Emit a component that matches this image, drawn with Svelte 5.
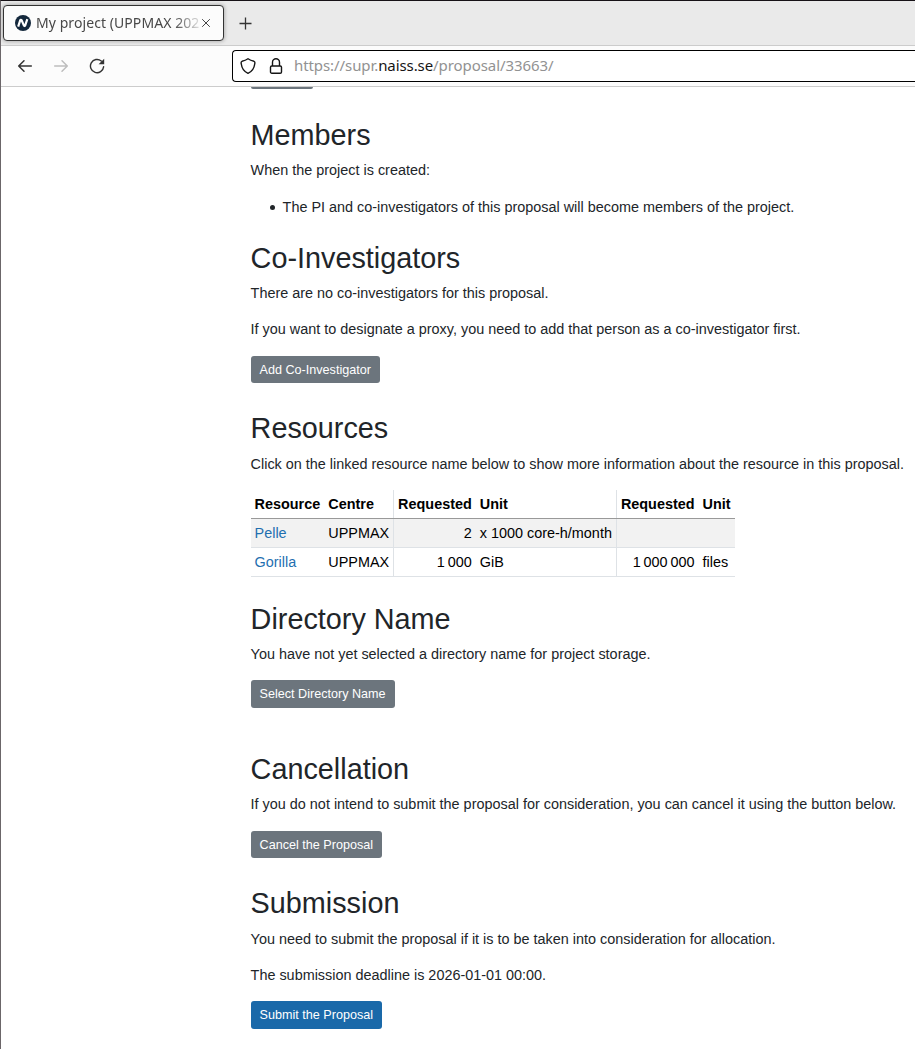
<script>
  const rows = [
    { name: 'Pelle', centre: 'UPPMAX', amount: '2', unit: 'x 1000 core-h/month', amount2: '', unit2: '' },
    { name: 'Gorilla', centre: 'UPPMAX', amount: '1\u2009000', unit: 'GiB', amount2: '1\u2009000\u2009000', unit2: 'files' }
  ];
</script>

<div class="window">
  <div class="tabs">
    <div class="tab">
      <svg class="logo" width="16" height="16" viewBox="0 0 16 16">
        <circle cx="8" cy="8" r="8" fill="#14283c" />
        <path d="M3.2 11.6 L5.1 5.6 Q5.8 4.2 6.8 5.5 L8.8 10.3 Q9.6 11.8 10.3 10.2 L12.3 4.2" fill="none" stroke="#fff" stroke-width="2.2" />
      </svg>
      <span class="title">My project (UPPMAX 202</span>
      <svg class="close" width="10" height="10" viewBox="0 0 10 10"><path d="M1.2 1.2 L8.8 8.8 M8.8 1.2 L1.2 8.8" stroke="#444" stroke-width="1" /></svg>
    </div>
    <svg class="plus" width="13" height="13" viewBox="0 0 13 13"><path d="M6.5 .5 V12.5 M.5 6.5 H12.5" stroke="#333" stroke-width="1.3" /></svg>
  </div>
  <div class="toolbar">
    <svg width="16" height="16" viewBox="0 0 16 16" fill="none" stroke="#333" stroke-width="1.5" stroke-linecap="round" stroke-linejoin="round"><path d="M14.3 8 H1.7 M7 2.7 L1.7 8 L7 13.3" /></svg>
    <svg class="forward" width="16" height="16" viewBox="0 0 16 16" fill="none" stroke="#bdbdbd" stroke-width="1.5" stroke-linecap="round" stroke-linejoin="round"><path d="M1.7 8 H14.3 M9 2.7 L14.3 8 L9 13.3" /></svg>
    <svg class="reload" width="16" height="16" viewBox="0 0 16 16"><path d="M14.6 8.8 A6.6 6.6 0 1 1 12.3 3" fill="none" stroke="#333" stroke-width="1.4" stroke-linecap="round" /><path d="M15.2 .8 V6.2 H9.6 Z" fill="#333" /></svg>
    <div class="address">
      <svg width="16" height="16" viewBox="0 0 16 16" fill="none" stroke="#151515" stroke-width="1.4" stroke-linejoin="round"><path d="M8 .8 Q10.5 2.6 14 3.3 Q15.3 3.7 14.7 6 Q13.9 12.8 8 15.3 Q2.1 12.8 1.3 6 Q.7 3.7 2 3.3 Q5.5 2.6 8 .8 Z" /></svg>
      <svg class="lock" width="14" height="16" viewBox="0 0 14 16" fill="none" stroke="#151515" stroke-width="1.4"><rect x="1.5" y="8" width="11" height="7.2" rx="1.3" /><path d="M3.5 8 V4.3 A3.5 3.5 0 0 1 10.5 4.3 V8" /></svg>
      <span class="url">https://supr.<b>naiss.se</b>/proposal/33663/</span>
    </div>
  </div>

  <main>
    <div class="scrolled"></div>
    <section>
      <h2>Members</h2>
      <p>When the project is created:</p>
      <ul><li>The PI and co-investigators of this proposal will become members of the project.</li></ul>
    </section>
    <section class="investigators">
      <h2>Co-Investigators</h2>
      <p>There are no co-investigators for this proposal.</p>
      <p>If you want to designate a proxy, you need to add that person as a co-investigator first.</p>
      <button>Add Co-Investigator</button>
    </section>
    <section class="resources">
      <h2>Resources</h2>
      <p>Click on the linked resource name below to show more information about the resource in this proposal.</p>
      <table>
        <thead>
          <tr><th>Resource</th><th>Centre</th><th class="num">Requested</th><th>Unit</th><th class="num">Requested</th><th>Unit</th></tr>
        </thead>
        <tbody>
          {#each rows as row}
            <tr>
              <td><span class="link">{row.name}</span></td>
              <td>{row.centre}</td>
              <td class="num">{row.amount}</td>
              <td>{row.unit}</td>
              <td class="num">{row.amount2}</td>
              <td>{row.unit2}</td>
            </tr>
          {/each}
        </tbody>
      </table>
    </section>
    <section class="directory">
      <h2>Directory Name</h2>
      <p>You have not yet selected a directory name for project storage.</p>
      <button class="tall">Select Directory Name</button>
    </section>
    <section class="cancellation">
      <h2>Cancellation</h2>
      <p>If you do not intend to submit the proposal for consideration, you can cancel it using the button below.</p>
      <button>Cancel the Proposal</button>
    </section>
    <section class="submission">
      <h2>Submission</h2>
      <p>You need to submit the proposal if it is to be taken into consideration for allocation.</p>
      <p>The submission deadline is 2026-01-01 00:00.</p>
      <button class="tall primary">Submit the Proposal</button>
    </section>
  </main>
</div>

<style>
  :global(body) { background: #fff; overflow: hidden; }
  .window {
    box-sizing: border-box;
    width: 915px;
    height: 1049px;
    overflow: hidden;
    border-top: 1px solid #171217;
    border-left: 1px solid #6b6669;
    font-family: "Liberation Sans", Arial, sans-serif;
    font-size: 14.415px;
    line-height: 21.6px;
    color: #212529;
  }
  svg { display: block; flex: none; }
  .tabs {
    box-sizing: border-box;
    display: flex;
    align-items: center;
    height: 45px;
    padding-left: 2px;
    background: #eaeaea;
    border-bottom: 1px solid #ccc;
  }
  .tab {
    box-sizing: border-box;
    display: flex;
    align-items: center;
    width: 221px;
    height: 36px;
    padding: 0 12px 0 11px;
    background: #fcfcfc;
    border: 1px solid #333;
    border-radius: 4px;
    box-shadow: 0 0 4px rgba(0, 0, 0, .35);
  }
  .title {
    flex: none;
    width: 165px;
    margin-left: 5px;
    white-space: nowrap;
    font: 400 14px/22px "Noto Sans", sans-serif;
    letter-spacing: .07px;
    color: #484848;
    -webkit-mask-image: linear-gradient(to right, #000 138px, transparent 168px);
    mask-image: linear-gradient(to right, #000 138px, transparent 168px);
  }
  .plus { margin-left: 15px; }
  .toolbar {
    box-sizing: border-box;
    display: flex;
    align-items: center;
    height: 41px;
    padding-left: 16px;
    background: #fcfcfc;
    border-bottom: 1px solid #ccc;
  }
  .forward { margin-left: 20px; }
  .reload { margin-left: 20px; }
  .address {
    box-sizing: border-box;
    display: flex;
    align-items: center;
    flex: 1;
    height: 32px;
    margin-left: 127px;
    padding-left: 7px;
    background: #fff;
    border: 1px solid #000;
    border-right: 0;
    border-radius: 4px 0 0 4px;
  }
  .lock { margin-left: 13px; }
  .url { margin: 0 0 2px 11px; font: 400 15px/24px "Noto Sans", sans-serif; letter-spacing: -.08px; color: #929292; white-space: nowrap; }
  .url b { font-weight: 400; color: #151515; }
  main { padding-left: 249.6px; }
  .scrolled { width: 62px; height: 2px; margin-bottom: 29px; background: #6c757d; border-radius: 0 0 3px 3px; }
  h2 { margin: 0 0 7.2px; font-size: 28.8px; font-weight: 400; line-height: 34.56px; }
  p { margin: 0 0 14.4px; white-space: nowrap; }
  ul { margin: 15.2px 0 0; padding-left: 19.4px; list-style: none; }
  li { display: flex; align-items: center; gap: 7.6px; }
  li::before { content: ""; width: 5px; height: 5px; margin-top: 1px; border-radius: 50%; background: #212529; }
  .investigators { margin-top: 23.2px; }
  .resources { margin-top: 28px; }
  .resources h2 { margin-bottom: 8px; }
  .directory { margin-top: 24.6px; }
  .cancellation { margin-top: 44.3px; }
  .submission { margin-top: 27.9px; }
  .submission h2 { margin-bottom: 7.8px; }
  button {
    box-sizing: border-box;
    display: block;
    height: 27.4px;
    margin: 15.3px 0 0;
    padding: 1px 9px 0;
    border: 0;
    border-radius: 3px;
    background: #6c757d;
    color: #fff;
    font: 12.6px/27px "Liberation Sans", Arial, sans-serif;
    white-space: nowrap;
  }
  .tall { height: 28px; margin-top: 14.7px; line-height: 26.8px; }
  .primary { background: #1a69a9; }
  table { border-collapse: collapse; color: #000; white-space: nowrap; }
  th, td { padding: 4px 4px 2.4px; text-align: left; border-bottom: 1px solid #dee2e6; }
  th { padding-top: 4.4px; padding-bottom: 2.5px; border-bottom-color: #999; font-weight: 700; }
  .num { text-align: right; border-left: 1px solid #dee2e6; }
  tbody tr:first-child td { background: #f2f2f2; }
  .link { color: #1f6fb0; }
</style>
